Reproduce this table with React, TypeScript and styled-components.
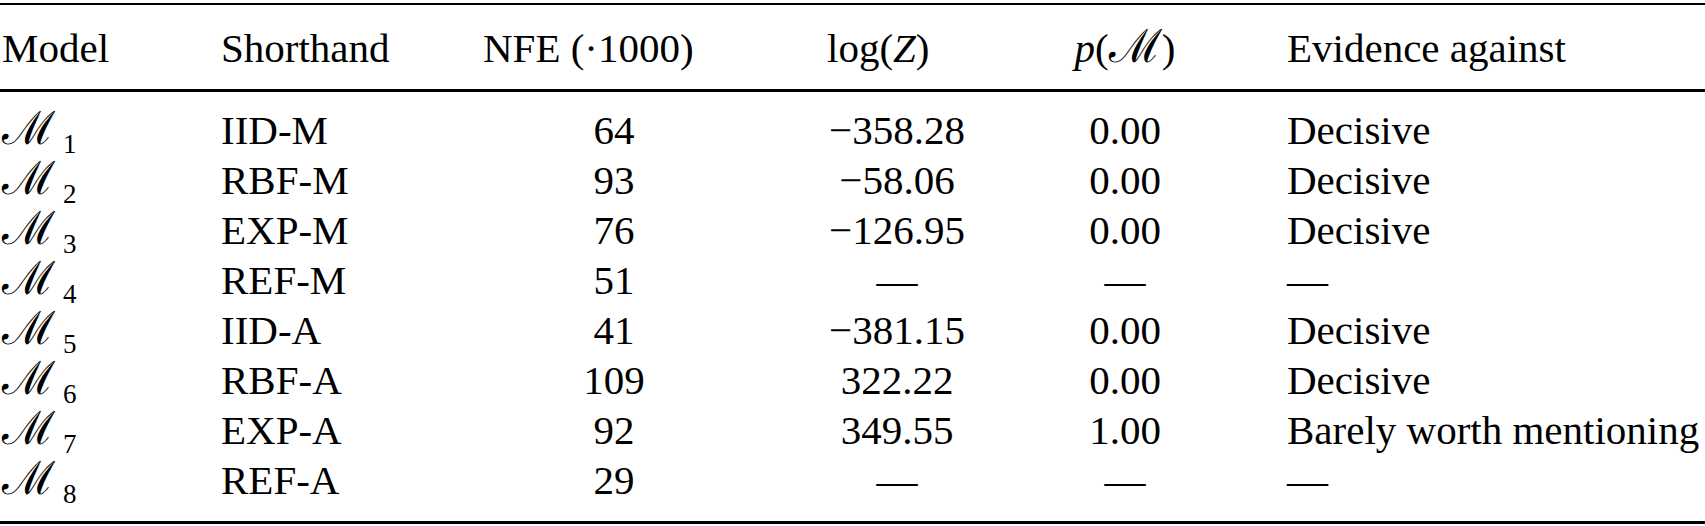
import React from 'react';
import styled, { createGlobalStyle } from 'styled-components';

const GlobalStyle = createGlobalStyle`
  html, body {
    margin: 0;
    padding: 0;
    background: #fff;
  }
  body {
    font-family: "Liberation Serif", "Times New Roman", serif;
    color: #000;
  }
`;

type Row = {
  idx: number;
  short: string;
  nfe: string;
  logz: string;
  pm: string;
  evidence: string;
};

const rows: Row[] = [
  { idx: 1, short: 'IID-M', nfe: '64', logz: '\u2212358.28', pm: '0.00', evidence: 'Decisive' },
  { idx: 2, short: 'RBF-M', nfe: '93', logz: '\u221258.06', pm: '0.00', evidence: 'Decisive' },
  { idx: 3, short: 'EXP-M', nfe: '76', logz: '\u2212126.95', pm: '0.00', evidence: 'Decisive' },
  { idx: 4, short: 'REF-M', nfe: '51', logz: '\u2014', pm: '\u2014', evidence: '\u2014' },
  { idx: 5, short: 'IID-A', nfe: '41', logz: '\u2212381.15', pm: '0.00', evidence: 'Decisive' },
  { idx: 6, short: 'RBF-A', nfe: '109', logz: '322.22', pm: '0.00', evidence: 'Decisive' },
  { idx: 7, short: 'EXP-A', nfe: '92', logz: '349.55', pm: '1.00', evidence: 'Barely worth mentioning' },
  { idx: 8, short: 'REF-A', nfe: '29', logz: '\u2014', pm: '\u2014', evidence: '\u2014' },
];

export default function App() {
  return (
    <>
      <GlobalStyle />
      <Page>
        <Table>
          <HeadRow>
            <Cell $pad={2}>Model</Cell>
            <Cell>Shorthand</Cell>
            <Cell>NFE (·1000)</Cell>
            <Cell $pad={82}>
              log(<Italic>Z</Italic>)
            </Cell>
            <Cell $align="center">
              <Italic>p</Italic>(<Script $size={46}>ℳ</Script>)
            </Cell>
            <Cell $pad={86}>Evidence against</Cell>
          </HeadRow>
          <Body>
            {rows.map((r) => (
              <DataRow key={r.idx}>
                <Cell $pad={2}>
                  <Script $size={46}>ℳ</Script>
                  <Sub>{r.idx}</Sub>
                </Cell>
                <Cell>{r.short}</Cell>
                <Cell $align="center">{r.nfe}</Cell>
                <Cell $align="center">{r.logz}</Cell>
                <Cell $align="center">{r.pm}</Cell>
                <Cell $pad={86}>{r.evidence}</Cell>
              </DataRow>
            ))}
          </Body>
        </Table>
      </Page>
    </>
  );
}

const Page = styled.div`
  width: 1705px;
  height: 526px;
  padding-top: 3px;
  box-sizing: border-box;
  background: #fff;
`;

const Table = styled.div`
  border-top: 2px solid #000;
  font-size: 41px;
  line-height: 50px;
`;

const columns = '221px 262px 262px 304px 152px 1fr';

const HeadRow = styled.div`
  display: grid;
  grid-template-columns: ${columns};
  padding: 18px 0 16px;
  border-bottom: 3px solid #000;
`;

const Body = styled.div`
  padding: 13px 0 16px;
  border-bottom: 3px solid #000;
`;

const DataRow = styled.div`
  display: grid;
  grid-template-columns: ${columns};
  height: 50px;
`;

const Cell = styled.div<{ $align?: 'left' | 'center'; $pad?: number }>`
  text-align: ${(p) => p.$align || 'left'};
  padding-left: ${(p) => p.$pad || 0}px;
  white-space: nowrap;
`;

const Script = styled.span<{ $size: number }>`
  font-family: "DejaVu Serif", serif;
  font-style: normal;
  font-size: ${(p) => p.$size}px;
  line-height: 0;
`;

const Italic = styled.span`
  font-style: italic;
`;

const Sub = styled.span`
  font-size: 27px;
  line-height: 0;
  position: relative;
  top: 9px;
  margin-left: 8px;
`;
